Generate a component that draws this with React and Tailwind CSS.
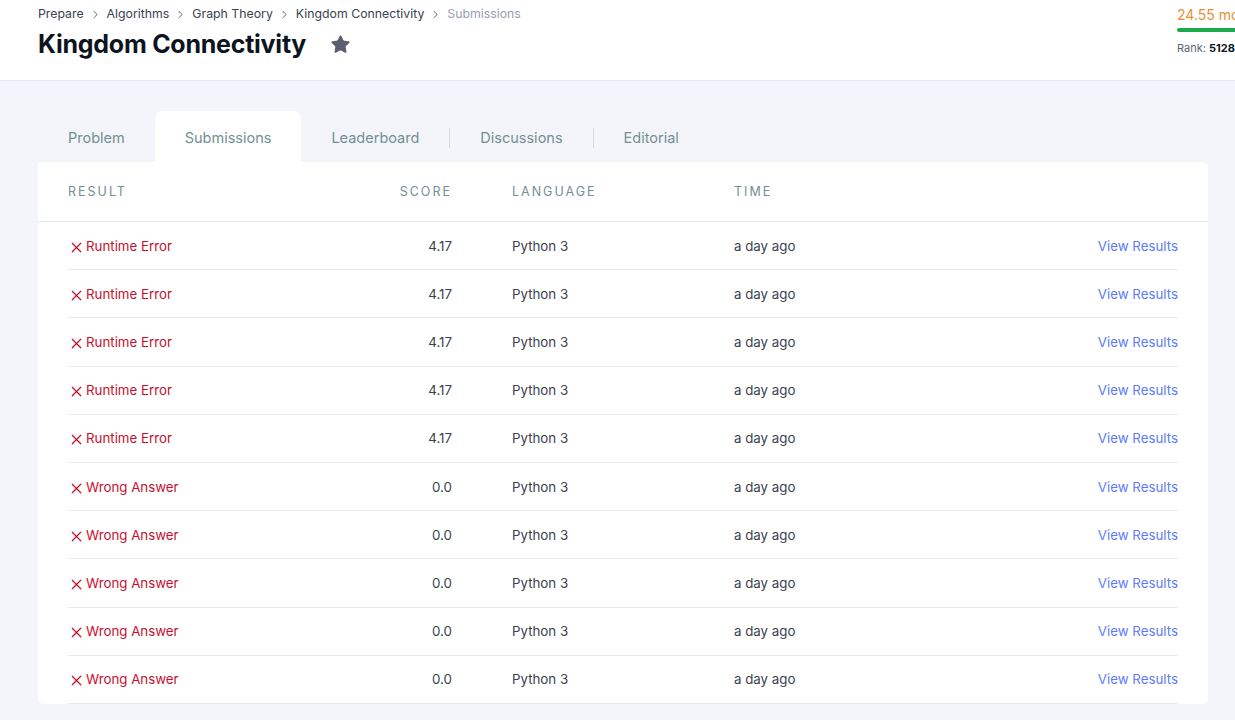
import { Star, X, ChevronRight } from 'lucide-react'

const ROWS = [
  ...Array(5).fill({ result: 'Runtime Error', score: '4.17' }),
  ...Array(5).fill({ result: 'Wrong Answer', score: '0.0' }),
]

const CRUMBS = ['Prepare', 'Algorithms', 'Graph Theory', 'Kingdom Connectivity']

export default function App() {
  return (
    <div className="min-h-[720px] bg-[#f3f5fa] font-['Inter',sans-serif] text-[#39424e] overflow-hidden">
      <Header />
      <div className="pl-[38px] pr-[27px] pt-[30px]">
        <Tabs />
        <div className="bg-white rounded-b-md rounded-tr-md">
          <div className="flex items-center h-[60px] pt-[2px] px-[30px] border-b border-[#e6ecee] text-[12.5px] tracking-[0.16em] text-[#738f93]">
            <div className="w-[300px]">RESULT</div>
            <div className="w-[84px] text-right">SCORE</div>
            <div className="w-[222px] ml-[60px]">LANGUAGE</div>
            <div>TIME</div>
          </div>
          <div className="px-[30px]">
            {ROWS.map((r, i) => (
              <Row key={i} row={r} />
            ))}
          </div>
        </div>
      </div>
    </div>
  )
}

function Header() {
  return (
    <div className="bg-white h-[81px] border-b border-[#e6e9ef] flex justify-between pl-[38px]">
      <div>
        <div className="flex items-center h-[27px] text-[12.3px] pt-[1px]">
          {CRUMBS.map((c) => (
            <span key={c} className="flex items-center">
              <span className="text-[#39424e]">{c}</span>
              <ChevronRight className="w-[13px] h-[13px] mx-[5px] text-[#39424e]" strokeWidth={1.5} />
            </span>
          ))}
          <span className="text-[#979faf]">Submissions</span>
        </div>
        <div className="flex items-center mt-[1px]">
          <h1 className="text-[25px] font-bold tracking-[-0.01em] text-[#0e141e] leading-[32px]">
            Kingdom Connectivity
          </h1>
          <Star className="w-[21px] h-[21px] ml-[24px] fill-[#5b5e6e] text-[#5b5e6e]" strokeWidth={1} />
        </div>
      </div>
      <div className="w-[58px] pt-[4px]">
        <div className="text-[14px] text-[#e39237] whitespace-nowrap">24.55 mo</div>
        <div className="h-[4px] bg-[#1ba94c] rounded-l-full mt-[3px]" />
        <div className="text-[11px] mt-[8px] whitespace-nowrap text-[#576871]">
          Rank: <span className="font-bold text-[#0e141e]">5128</span>
        </div>
      </div>
    </div>
  )
}

function Tabs() {
  return (
    <div className="flex items-end h-[51px] text-[14.5px] text-[#738f93]">
      <div className="h-full flex items-center pt-[3px] px-[30px]">Problem</div>
      <div className="h-full flex items-center pt-[3px] px-[30px] bg-white rounded-t-lg">Submissions</div>
      <div className="h-full flex items-center pt-[3px] px-[30px]">Leaderboard</div>
      <div className="w-px h-[20px] bg-[#d5dce0] mb-[14px]" />
      <div className="h-full flex items-center pt-[3px] px-[30px]">Discussions</div>
      <div className="w-px h-[20px] bg-[#d5dce0] mb-[14px]" />
      <div className="h-full flex items-center pt-[3px] px-[30px]">Editorial</div>
    </div>
  )
}

function Row({ row }) {
  return (
    <div className="flex items-center h-[48.2px] pt-[2px] border-b border-[#e6ecee] text-[13.3px]">
      <div className="w-[300px] flex items-center text-[#c8102e]">
        <X className="w-[17px] h-[17px] mr-[1px] mt-[1px]" strokeWidth={1.7} />
        {row.result}
      </div>
      <div className="w-[84px] text-right">{row.score}</div>
      <div className="w-[222px] ml-[60px]">Python 3</div>
      <div className="flex-1">a day ago</div>
      <div className="text-[#5c7cfa]">View Results</div>
    </div>
  )
}
